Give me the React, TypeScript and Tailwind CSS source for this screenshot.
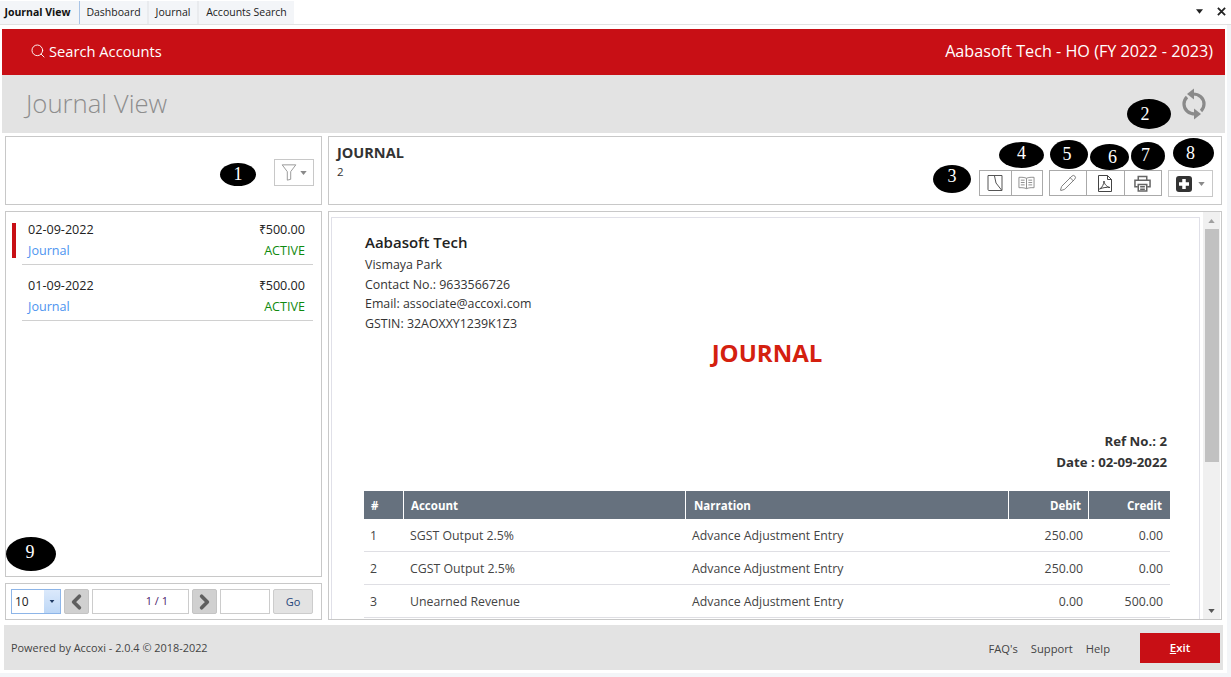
import type { ReactNode } from 'react';
import { Search, Pencil, ChevronLeft, ChevronRight } from 'lucide-react';

const rows = [
  { no: '1', account: 'SGST Output 2.5%', debit: '250.00', credit: '0.00' },
  { no: '2', account: 'CGST Output 2.5%', debit: '250.00', credit: '0.00' },
  { no: '3', account: 'Unearned Revenue', debit: '0.00', credit: '500.00' },
];

const markers = [
  { n: '1', cls: 'left-[220px] top-[163px] w-[36px] h-[23px]' },
  { n: '2', cls: 'left-[1127px] top-[99px] w-[44px] h-[30px] pr-[8px]' },
  { n: '3', cls: 'left-[933px] top-[165px] w-[38px] h-[28px] pb-[5px]' },
  { n: '4', cls: 'left-[999px] top-[142px] w-[45px] h-[26px] pb-[3px]' },
  { n: '5', cls: 'left-[1050px] top-[140px] w-[38px] h-[29px] pr-[4px]' },
  { n: '6', cls: 'left-[1090px] top-[144px] w-[39px] h-[26px] pl-[6px]' },
  { n: '7', cls: 'left-[1131px] top-[142px] w-[34px] h-[28px] pr-[5px] pb-[2px]' },
  { n: '8', cls: 'left-[1173px] top-[138px] w-[41px] h-[30px] pr-[6px]' },
  { n: '9', cls: 'left-[6px] top-[537px] w-[50px] h-[34px] pr-[2px] pb-[3px]' },
];

function Caret({ className }: { className: string }) {
  return (
    <svg viewBox="0 0 8 5" className={className}>
      <path d="M0 0h8L4 5z" fill="currentColor" />
    </svg>
  );
}

function ListItem({ date, active }: { date: string; active?: boolean }) {
  return (
    <div
      className={
        'relative ml-[16px] mr-[8px] border-b border-[#d0d0d0] pb-[2px] pl-[6px] pr-[8px] text-[12.6px] ' +
        (active ? 'pt-[8px]' : 'pt-[11px]')
      }
    >
      {active && <div className="absolute left-[-10px] top-[11px] h-[35px] w-[4px] bg-[#c80f15]" />}
      <div className="flex h-[21px] items-center justify-between text-[#222]">
        <span>{date}</span>
        <span>₹500.00</span>
      </div>
      <div className="flex h-[21px] items-center justify-between">
        <span className="text-[#4d94f0]">Journal</span>
        <span className="text-[#0f8a0f]">ACTIVE</span>
      </div>
    </div>
  );
}

function ToolButton({ children, last }: { children: ReactNode; last?: boolean }) {
  return (
    <div className={'flex h-full flex-1 items-center justify-center ' + (last ? '' : 'border-r border-[#aaa]')}>
      {children}
    </div>
  );
}

export default function App() {
  return (
    <div className="relative flex h-[677px] w-[1231px] flex-col overflow-hidden bg-[#f3f5f8] text-[#333]">
      <div className="flex h-[25px] shrink-0 border-b border-[#e2e2e2] bg-white pt-[1px] font-['Open_Sans',sans-serif] text-[10.5px] text-[#222]">
        <div className="flex w-[80px] items-center justify-center border-r border-[#a9c4e6] bg-[#f3f5f8] pr-[4px] font-bold text-[#111]">
          Journal View
        </div>
        <div className="flex w-[69px] items-center justify-center border-r-2 border-[#e9ebee] bg-[#f3f5f8]">Dashboard</div>
        <div className="flex w-[50px] items-center justify-center border-r-2 border-[#e9ebee] bg-[#f3f5f8]">Journal</div>
        <div className="flex w-[95px] items-center justify-center bg-[#f3f5f8]">Accounts Search</div>
        <div className="ml-auto flex items-center gap-[14px] pr-[5px] pb-[3px] text-[#222]">
          <Caret className="h-[5px] w-[7px]" />
          <svg viewBox="0 0 10 10" className="h-[9px] w-[9px]">
            <path d="M1 1l8 8M9 1l-8 8" stroke="currentColor" strokeWidth="2" />
          </svg>
        </div>
      </div>

      <div className="flex h-[648px] w-[1227px] shrink-0 flex-col bg-white">
        <div className="mx-[2px] mt-[4px] flex h-[46px] w-[1223px] shrink-0 items-center justify-between bg-[#c80f15] pb-[1px] pl-[28px] pr-[12px] font-['Open_Sans',sans-serif] text-white">
          <div className="flex items-center gap-[3px] text-[14.7px]">
            <Search size={16} strokeWidth={1.4} />
            <span>Search Accounts</span>
          </div>
          <span className="text-[16.2px]">Aabasoft Tech - HO (FY 2022 - 2023)</span>
        </div>

        <div className="mx-[2px] flex h-[58px] w-[1223px] shrink-0 items-center justify-between bg-[#e3e3e3] pl-[24px] pr-[19px]">
          <span className="font-['Open_Sans',sans-serif] text-[25.7px] font-light text-[#8d8d8d]">Journal View</span>
          <svg viewBox="0 0 24 32" className="h-[32px] w-[24px]" fill="none" stroke="#8a8a8a" strokeWidth="3.2">
            <path d="M11 6c6 0 11 4 11 10 0 3-1 5-3 7" />
            <path d="M5 6l7-5.500v11z" fill="#8a8a8a" stroke="none" />
            <path d="M13 26c-6 0-11-4-11-10 0-3 1-5 3-7" />
            <path d="M19 26l-7-5.500v11z" fill="#8a8a8a" stroke="none" />
          </svg>
        </div>

        <div className="ml-[5px] mt-[3px] flex w-[1217px] flex-1 gap-[6px] font-['Open_Sans',sans-serif]">
          <div className="flex w-[317px] flex-col gap-[6px]">
            <div className="flex h-[69px] items-start justify-end border border-[#c8c8c8] bg-white pr-[7px] pt-[22px]">
              <div className="flex h-[27px] w-[40px] items-center justify-center gap-[3px] border border-[#c8c8c8] text-[#8a8a8a]">
                <svg viewBox="0 0 18 20" className="h-[17px] w-[16px]" fill="none" stroke="#8a8a8a" strokeWidth="1">
                  <path d="M1 1h16l-6 8v9l-4 1V9z" />
                </svg>
                <Caret className="h-[4px] w-[7px]" />
              </div>
            </div>

            <div className="h-[366px] border border-[#c8c8c8] bg-white">
              <ListItem date="02-09-2022" active />
              <ListItem date="01-09-2022" />
            </div>

            <div className="flex h-[37px] items-center border border-[#c8c8c8] bg-white pl-[5px] text-[11px]">
              <div className="flex h-[25px] w-[50px] items-center justify-between border border-[#8db5e8] pl-[3px] text-[12px] text-[#222]">
                <span>10</span>
                <div className="flex h-full w-[16px] items-center justify-center bg-linear-to-b from-[#dbe9fb] to-[#bdd7f6] text-[#1f3a63]">
                  <Caret className="h-[3px] w-[6px]" />
                </div>
              </div>
              <div className="ml-[3px] flex h-[25px] w-[25px] items-center justify-center rounded-[2px] border border-[#c4c4c4] bg-[#d0d0d0] text-[#5f5f5f]">
                <ChevronLeft size={24} strokeWidth={3.8} />
              </div>
              <div className="ml-[3px] flex h-[25px] w-[97px] items-center justify-end border border-[#ccc] pr-[20px] text-[#4b1a6b]">1 / 1</div>
              <div className="ml-[3px] flex h-[25px] w-[25px] items-center justify-center rounded-[2px] border border-[#c4c4c4] bg-[#d0d0d0] text-[#5f5f5f]">
                <ChevronRight size={24} strokeWidth={3.8} />
              </div>
              <div className="ml-[3px] h-[25px] w-[50px] border border-[#ccc]" />
              <div className="ml-[3px] flex h-[25px] w-[40px] items-center justify-center rounded-[2px] border border-[#ccc] bg-[#e3e3e3] pt-[1px] text-[#24457a]">Go</div>
            </div>
          </div>

          <div className="flex flex-1 flex-col gap-[6px]">
            <div className="flex h-[69px] items-start justify-between border border-[#c8c8c8] bg-white pl-[8px] pr-[8px]">
              <div className="pt-[7px]">
                <div className="text-[14.5px] font-bold leading-[18px] text-[#333]">JOURNAL</div>
                <div className="text-[11.5px] leading-[20px] text-[#333]">2</div>
              </div>
              <div className="mt-[33px] flex items-start gap-[6px]">
                <div className="flex h-[26px] w-[64px] border border-[#aaa]">
                  <ToolButton>
                    <svg viewBox="0 0 16 16" className="h-[16px] w-[16px]" fill="none" stroke="#555" strokeWidth="1">
                      <path d="M1 .5h14v15H2a1 1 0 0 1-1-1z" />
                      <path d="M7.500 1l1.500 7 5.500 7" />
                    </svg>
                  </ToolButton>
                  <ToolButton last>
                    <svg viewBox="0 0 18 14" className="h-[14px] w-[17px]" fill="none" stroke="#8a8a8a" strokeWidth="1">
                      <path d="M9 2C7 1 4 .8 1 1v11c3-.2 6 0 8 1 2-1 5-1.200 8-1V1c-3-.2-6 0-8 1zM9 2v11" />
                      <path d="M3 4h4M3 6.500h4M3 9h4M11 4h4M11 6.500h4M11 9h4" />
                    </svg>
                  </ToolButton>
                </div>
                <div className="flex h-[26px] w-[113px] border border-[#aaa]">
                  <ToolButton>
                    <Pencil size={18} strokeWidth={1.1} color="#666" />
                  </ToolButton>
                  <ToolButton>
                    <svg viewBox="0 0 14 17" className="h-[17px] w-[14px]" fill="none" stroke="#444" strokeWidth="1">
                      <path d="M.5.5h9l4 4v12H.5zM9.500.5v4h4" />
                      <path d="M1.500 14C4 13 6 9 6 6c0 3 3 6 6 6.500-3-.5-7 0-10.500 1.500z" />
                    </svg>
                  </ToolButton>
                  <ToolButton last>
                    <svg viewBox="0 0 18 17" className="h-[17px] w-[17px]" fill="none" stroke="#666" strokeWidth="1.600">
                      <path d="M4.500 5V1h9v4" />
                      <path d="M4 12H1V5h16v7h-3" />
                      <path d="M4.500 9.500h9v7h-9zM6.500 12h5M6.500 14.500h5" />
                    </svg>
                  </ToolButton>
                </div>
                <div className="flex h-[27px] w-[45px] items-center justify-center gap-[6px] border border-[#c8c8c8] text-[#8a8a8a]">
                  <svg viewBox="0 0 16 16" className="h-[16px] w-[16px]">
                    <rect width="16" height="16" rx="3" fill="#333" />
                    <path d="M8 3v10M3 8h10" stroke="#fff" strokeWidth="3.5" />
                  </svg>
                  <Caret className="h-[4px] w-[7px]" />
                </div>
              </div>
            </div>

            <div className="flex h-[409px] overflow-hidden border border-[#c8c8c8] bg-white pl-[2px] pt-[5px]">
              <div className="flex-1 overflow-hidden border-l border-t border-r border-[#e0e0e8] pl-[32px] pr-[29px] pt-[14px] text-[#333]">
                <div className="pl-[1px] text-[15px] font-semibold leading-[20px] text-[#222]">Aabasoft Tech</div>
                <div className="mt-[3px] text-[12.4px] leading-[19.5px] text-[#333]">
                  <div className="pl-[1px]">Vismaya Park</div>
                  <div className="pl-[1px]">Contact No.: 9633566726</div>
                  <div className="pl-[1px]">Email: associate@accoxi.com</div>
                  <div className="pl-[1px]">GSTIN: 32AOXXY1239K1Z3</div>
                </div>
                <div className="mt-[5px] text-center text-[24px] font-bold leading-[30px] text-[#d4200f]">JOURNAL</div>
                <div className="mt-[63px] pr-[3px] text-right text-[13.2px] font-bold leading-[21px] text-[#333]">
                  <div>Ref No.: 2</div>
                  <div>Date : 02-09-2022</div>
                </div>
                <div className="mt-[18px] text-[12.3px]">
                  <div className="flex h-[28px] items-center bg-[#66717e] pt-0 text-[11.5px] font-bold text-white">
                    <div className="flex h-full w-[40px] items-center border-r border-white pl-[7px] pt-[1px]">#</div>
                    <div className="flex h-full w-[282px] items-center border-r border-white pl-[7px] pt-[1px]">Account</div>
                    <div className="flex h-full w-[323px] items-center border-r border-white pl-[8px] pt-[1px]">Narration</div>
                    <div className="flex h-full w-[80px] items-center justify-end border-r border-white pr-[7px] pt-[1px]">Debit</div>
                    <div className="flex h-full flex-1 items-center justify-end pr-[8px] pt-[1px]">Credit</div>
                  </div>
                  {rows.map((r) => (
                    <div key={r.no} className="flex h-[33px] items-center border-b border-[#dfdfe4] pt-[2px] text-[#444]">
                      <div className="w-[40px] pl-[6px]">{r.no}</div>
                      <div className="w-[282px] pl-[6px]">{r.account}</div>
                      <div className="w-[323px] pl-[6px]">Advance Adjustment Entry</div>
                      <div className="w-[80px] pr-[6px] text-right">{r.debit}</div>
                      <div className="flex-1 pr-[7px] text-right">{r.credit}</div>
                    </div>
                  ))}
                </div>
              </div>
              <div className="ml-[3px] mr-[1px] mt-[-5px] flex w-[17px] flex-col items-center bg-[#f0f0f0]">
                <div className="flex h-[17px] items-center text-[#a0a0a0]">
                  <Caret className="h-[4px] w-[7px] rotate-180" />
                </div>
                <div className="h-[233px] w-[14px] bg-[#c1c1c1]" />
                <div className="mt-auto flex h-[16px] items-center text-[#555]">
                  <Caret className="h-[4px] w-[7px]" />
                </div>
              </div>
            </div>
          </div>
        </div>

        <div className="ml-[4px] mb-[3px] mt-[5px] flex h-[45px] w-[1219px] shrink-0 items-center bg-[#e3e3e3] pl-[7px] pr-[3px] font-['Open_Sans',sans-serif] text-[#444]">
          <span className="pt-[1px] text-[10.9px]">Powered by Accoxi - 2.0.4 © 2018-2022</span>
          <div className="ml-auto flex gap-[13px] pt-[3px] text-[11.2px] text-[#444]">
            <span>FAQ's</span>
            <span>Support</span>
            <span>Help</span>
          </div>
          <div className="ml-[30px] flex h-[30px] w-[80px] items-center justify-center bg-[#c80f15] text-[11.5px] font-semibold text-white">
            <span><span className="underline">E</span>xit</span>
          </div>
        </div>
      </div>

      {markers.map((m) => (
        <div
          key={m.n}
          className={'absolute flex items-center justify-center rounded-[50%] bg-black font-["Liberation_Serif",serif] text-[18px] text-white ' + m.cls}
        >
          {m.n}
        </div>
      ))}
    </div>
  );
}
